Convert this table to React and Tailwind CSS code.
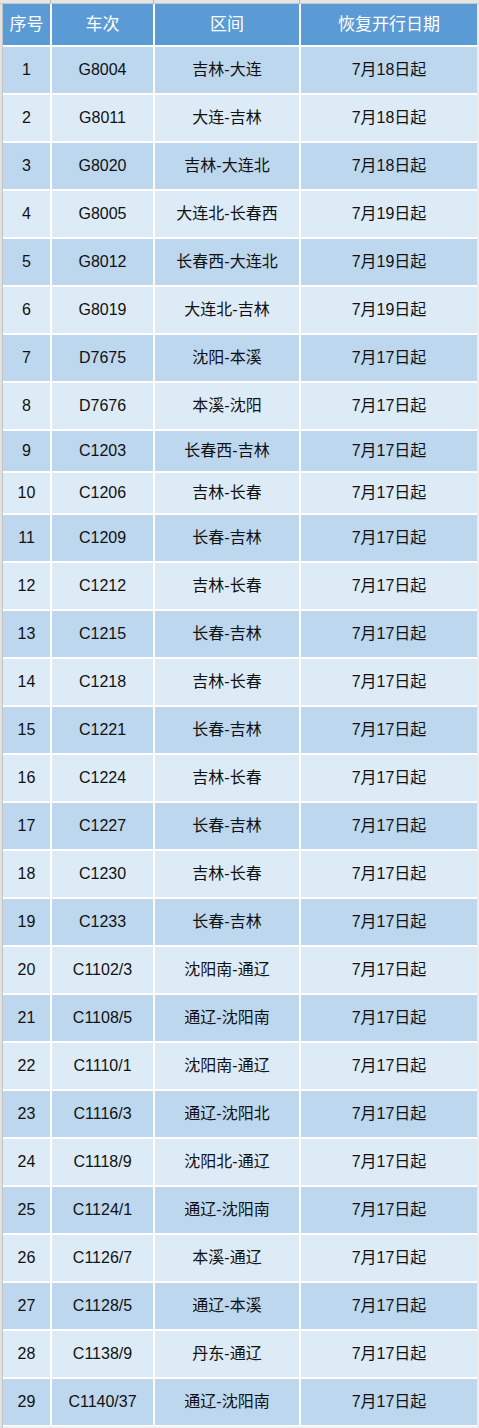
const ROWS = [
  ['1', 'G8004', '吉林-大连', '7月18日起'],
  ['2', 'G8011', '大连-吉林', '7月18日起'],
  ['3', 'G8020', '吉林-大连北', '7月18日起'],
  ['4', 'G8005', '大连北-长春西', '7月19日起'],
  ['5', 'G8012', '长春西-大连北', '7月19日起'],
  ['6', 'G8019', '大连北-吉林', '7月19日起'],
  ['7', 'D7675', '沈阳-本溪', '7月17日起'],
  ['8', 'D7676', '本溪-沈阳', '7月17日起'],
  ['9', 'C1203', '长春西-吉林', '7月17日起'],
  ['10', 'C1206', '吉林-长春', '7月17日起'],
  ['11', 'C1209', '长春-吉林', '7月17日起'],
  ['12', 'C1212', '吉林-长春', '7月17日起'],
  ['13', 'C1215', '长春-吉林', '7月17日起'],
  ['14', 'C1218', '吉林-长春', '7月17日起'],
  ['15', 'C1221', '长春-吉林', '7月17日起'],
  ['16', 'C1224', '吉林-长春', '7月17日起'],
  ['17', 'C1227', '长春-吉林', '7月17日起'],
  ['18', 'C1230', '吉林-长春', '7月17日起'],
  ['19', 'C1233', '长春-吉林', '7月17日起'],
  ['20', 'C1102/3', '沈阳南-通辽', '7月17日起'],
  ['21', 'C1108/5', '通辽-沈阳南', '7月17日起'],
  ['22', 'C1110/1', '沈阳南-通辽', '7月17日起'],
  ['23', 'C1116/3', '通辽-沈阳北', '7月17日起'],
  ['24', 'C1118/9', '沈阳北-通辽', '7月17日起'],
  ['25', 'C1124/1', '通辽-沈阳南', '7月17日起'],
  ['26', 'C1126/7', '本溪-通辽', '7月17日起'],
  ['27', 'C1128/5', '通辽-本溪', '7月17日起'],
  ['28', 'C1138/9', '丹东-通辽', '7月17日起'],
  ['29', 'C1140/37', '通辽-沈阳南', '7月17日起'],
]

const HEAD = ['序号', '车次', '区间', '恢复开行日期']

export default function App() {
  return (
    <div
      className="w-[479px] h-[1428px] bg-[#f2f2f2] flex flex-col overflow-hidden"
      style={{ fontFamily: '"Liberation Sans", "Noto Sans CJK SC", sans-serif' }}
    >
      {/* spreadsheet column header remnant */}
      <div className="h-[4px] shrink-0 bg-[#e4e4e4] border-b border-[#c8c8c8] flex">
        <div className="w-[3px]" />
        <div className="w-[48px] border-r border-[#b8b8b8]" />
        <div className="w-[103px] border-r border-[#b8b8b8]" />
        <div className="w-[146px] border-r border-[#b8b8b8]" />
      </div>

      <div className="flex flex-1">
        {/* spreadsheet row header remnant */}
        <div className="w-[3px] shrink-0 bg-[#e2e2e2] border-r border-[#c4c4c4]" />

        <div className="grid grid-cols-[47px_101px_144px_176px] gap-[2px] bg-white content-start h-[1422px]">
          {HEAD.map(h => (
            <div key={h} className="h-[41px] bg-[#5b9bd5] text-white text-[17px] flex items-center justify-center">
              {h}
            </div>
          ))}
          {ROWS.map((r, i) => {
            const short = i === 8 || i === 9
            const odd = i % 2 === 0
            return r.map((c, j) => (
              <div
                key={i + '-' + j}
                className={
                  'flex items-center justify-center text-[16px] text-[#111] ' +
                  (short ? 'h-[40px] ' : 'h-[46px] ') +
                  (odd ? 'bg-[#bdd7ee]' : 'bg-[#ddebf7]')
                }
              >
                {c}
              </div>
            ))
          })}
        </div>

        <div className="flex-1 bg-[#ececec]" />
      </div>
    </div>
  )
}
